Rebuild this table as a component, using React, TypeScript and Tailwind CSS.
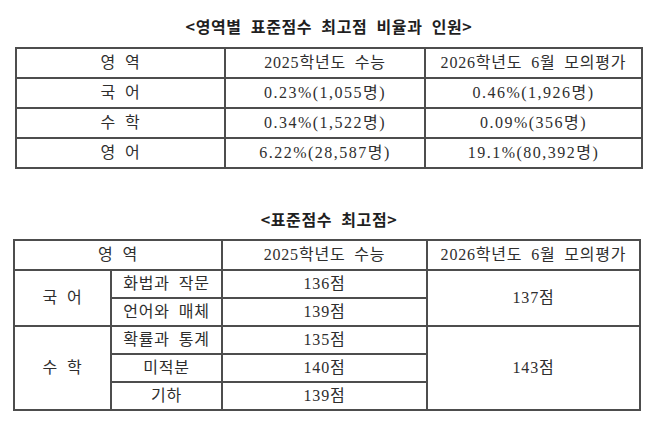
const font = { fontFamily: '"Liberation Serif", "Noto Sans CJK KR", serif' };

const rates = [
  { area: "국 어", a: "0.23%(1,055명)", b: "0.46%(1,926명)" },
  { area: "수 학", a: "0.34%(1,522명)", b: "0.09%(356명)" },
  { area: "영 어", a: "6.22%(28,587명)", b: "19.1%(80,392명)" },
];

// label cells (mostly hangul) and number cells get different letter spacing
const td = "border-2 border-[#4d4d4d] text-center align-middle p-0 tracking-[0.8px] [word-spacing:4px]";
const num = "border-2 border-[#4d4d4d] text-center align-middle p-0 tracking-[1.5px]";

export default function App() {
  return (
    <div
      className="w-[658px] h-[427px] bg-white text-[#2e2e2e] flex flex-col"
      style={font}
    >
      <h2 className="pt-[16px] h-[36px] text-center text-[16px] leading-[20px] font-bold text-[#1f1f1f] tracking-[0.6px] [word-spacing:5px] font-['Noto_Sans_CJK_KR',sans-serif]">
        &lt;영역별 표준점수 최고점 비율과 인원&gt;
      </h2>

      <table className="ml-[15px] mt-[11px] w-[626px] border-collapse table-fixed text-[16px]">
        <colgroup>
          <col className="w-[209px]" />
          <col className="w-[200px]" />
          <col className="w-[217px]" />
        </colgroup>
        <tbody>
          <tr className="h-[30px]">
            <td className={td}>영 역</td>
            <td className={td}>2025학년도 수능</td>
            <td className={td}>2026학년도 6월 모의평가</td>
          </tr>
          {rates.map((r) => (
            <tr key={r.area} className="h-[30px]">
              <td className={td}>{r.area}</td>
              <td className={num}>{r.a}</td>
              <td className={num}>{r.b}</td>
            </tr>
          ))}
        </tbody>
      </table>

      <h2 className="mt-[40px] h-[20px] text-center text-[16px] leading-[20px] font-bold text-[#1f1f1f] tracking-[0.6px] [word-spacing:5px] font-['Noto_Sans_CJK_KR',sans-serif]">
        &lt;표준점수 최고점&gt;
      </h2>

      <table className="ml-[13px] mt-[10px] w-[626px] border-collapse table-fixed text-[16px]">
        <colgroup>
          <col className="w-[97px]" />
          <col className="w-[111px]" />
          <col className="w-[205px]" />
          <col className="w-[213px]" />
        </colgroup>
        <tbody>
          <tr className="h-[30px]">
            <td className={td} colSpan={2}>영 역</td>
            <td className={td}>2025학년도 수능</td>
            <td className={td}>2026학년도 6월 모의평가</td>
          </tr>
          <tr className="h-[28px]">
            <td className={td} rowSpan={2}>국 어</td>
            <td className={td}>화법과 작문</td>
            <td className={td}>136점</td>
            <td className={td} rowSpan={2}>137점</td>
          </tr>
          <tr className="h-[28px]">
            <td className={td}>언어와 매체</td>
            <td className={td}>139점</td>
          </tr>
          <tr className="h-[28px]">
            <td className={td} rowSpan={3}>수 학</td>
            <td className={td}>확률과 통계</td>
            <td className={td}>135점</td>
            <td className={td} rowSpan={3}>143점</td>
          </tr>
          <tr className="h-[28px]">
            <td className={td}>미적분</td>
            <td className={td}>140점</td>
          </tr>
          <tr className="h-[28px]">
            <td className={td}>기하</td>
            <td className={td}>139점</td>
          </tr>
        </tbody>
      </table>
    </div>
  );
}
